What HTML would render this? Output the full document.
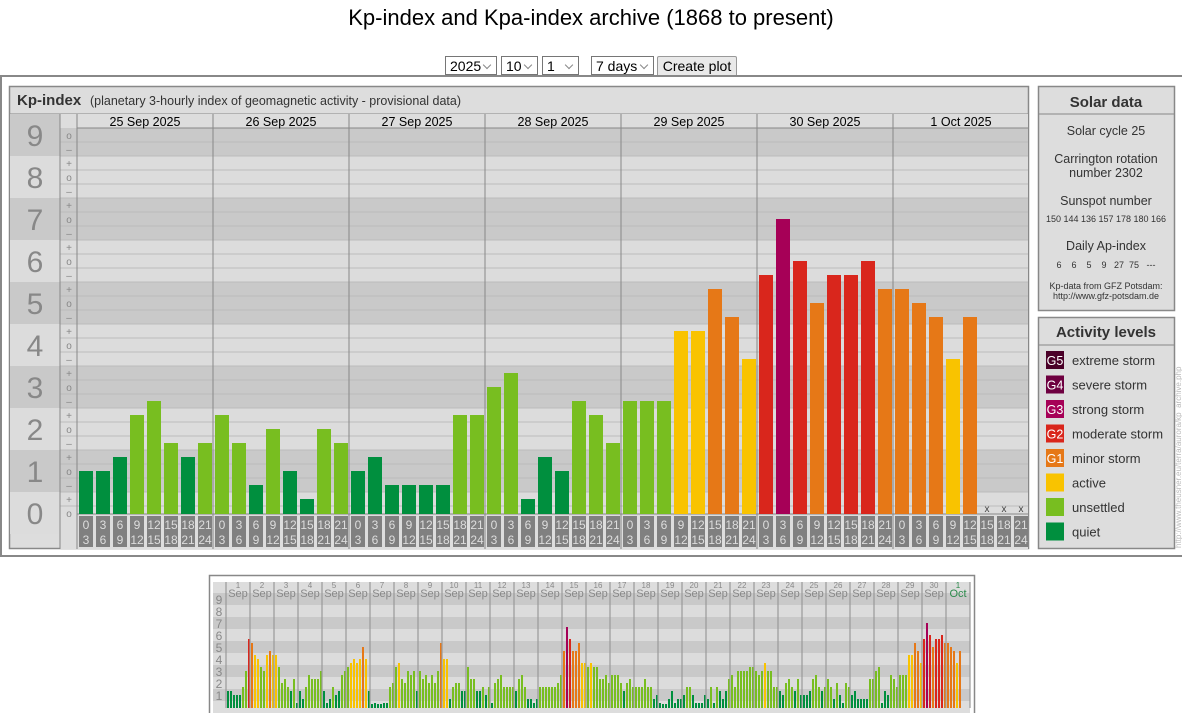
<!DOCTYPE html>
<html><head><meta charset="utf-8"><style>
html,body{margin:0;padding:0;background:#fff;}
body{width:1182px;height:713px;position:relative;overflow:hidden;font-family:"Liberation Sans",Arial,sans-serif;}
h1{position:absolute;left:0;width:1182px;top:5px;margin:0;text-align:center;font-weight:normal;font-size:22px;color:#000;}
.sel{position:absolute;top:56px;height:19px;border:1px solid #767676;background:#fff;font-size:14px;line-height:19px;box-sizing:border-box;padding-left:4px;}
.sel:after{content:"";position:absolute;right:6px;top:5px;width:5px;height:5px;border-right:1px solid #888;border-bottom:1px solid #888;transform:rotate(45deg);}
.btn{position:absolute;top:56px;left:657px;width:80px;height:21px;border:1px solid #999;background:#e9e9e9;font-size:14px;line-height:19px;text-align:center;box-sizing:border-box;border-radius:2px;}
svg{position:absolute;left:0;top:0;}
</style></head><body>
<h1>Kp-index and Kpa-index archive (1868 to present)</h1>
<div class="sel" style="left:445px;width:52px">2025</div>
<div class="sel" style="left:501px;width:37px">10</div>
<div class="sel" style="left:542px;width:37px">1</div>
<div class="sel" style="left:591px;width:63px">7 days</div>
<div class="btn">Create plot</div>
<svg id="s" width="1182" height="713" xmlns="http://www.w3.org/2000/svg" font-family="Liberation Sans, Arial, sans-serif"></svg>
<script>
(function(){
var s=document.getElementById('s'),h='';
function R(x,y,w,hh,f,st,sw){h+='<rect x="'+x+'" y="'+y+'" width="'+w+'" height="'+hh+'" fill="'+f+'"'+(st?' stroke="'+st+'" stroke-width="'+(sw||1)+'"':'')+'/>';}
function L(x1,y1,x2,y2,c,w){h+='<line x1="'+x1+'" y1="'+y1+'" x2="'+x2+'" y2="'+y2+'" stroke="'+c+'" stroke-width="'+(w||1)+'"/>';}
function T(x,y,t,sz,c,a,wgt){h+='<text x="'+x+'" y="'+y+'" font-size="'+sz+'" fill="'+c+'" text-anchor="'+(a||'start')+'"'+(wgt?' font-weight="bold"':'')+'>'+t+'</text>';}
function col(v){v=Math.round(v*3)/3;if(v<1.5)return'#008f3e';if(v<3.5)return'#78be20';if(v<4.5)return'#f9c300';if(v<5.5)return'#e67817';if(v<6.5)return'#d9261c';if(v<7.5)return'#a60057';if(v<8.5)return'#6e0040';return'#4a0028';}
R(1,76,1190,480,'#fff','#888',2);
R(9.5,86.5,1019,462,'#ddd','#888',1.5);
L(10,114,1028,114,'#888',1);
T(17,105,'Kp-index',15,'#333','start',1);
T(90,105,'(planetary 3-hourly index of geomagnetic activity - provisional data)',12.5,'#333');
for(var k=9;k>=0;k--){var y0=Math.max(128,492-42*k),y1=Math.min(514,534-42*k);var c=(k%2)?'#c9c9c9':'#dcdcdc';
R(10,Math.max(114,492-42*k),50,Math.min(549,534-42*k)-Math.max(114,492-42*k),c);
R(60,y0,968,y1-y0,c);
T(35,513-42*k+11,k,30,'#888','middle');}
R(60,514,968,35,'#ddd');R(60,114,968,14,'#ddd');
for(var yl=142;yl<514;yl+=14)L(60,yl,1028,yl,'#bbb',1);
var marks=['o','+','–'];
for(var v=0;v<=27;v++){var yy=513-14*v;if(yy<130)continue;T(69,yy+4,marks[v%3],10,'#888','middle');}
L(60,114,60,549,'#888',1);L(77,114,77,549,'#888',1);L(77,128,1028,128,'#888',1);L(77,514,1028,514,'#888',1);
var days=['25 Sep 2025','26 Sep 2025','27 Sep 2025','28 Sep 2025','29 Sep 2025','30 Sep 2025','1 Oct 2025'];
var data=[[1,1,4/3,7/3,8/3,5/3,4/3,5/3],[7/3,5/3,2/3,2,1,1/3,2,5/3],[1,4/3,2/3,2/3,2/3,2/3,7/3,7/3],[3,10/3,1/3,4/3,1,8/3,7/3,5/3],[8/3,8/3,8/3,13/3,13/3,16/3,14/3,11/3],[17/3,7,6,5,17/3,17/3,6,16/3],[16/3,5,14/3,11/3,14/3,null,null,null]];
var hr=[['0','3'],['3','6'],['6','9'],['9','12'],['12','15'],['15','18'],['18','21'],['21','24']];
for(var d=0;d<7;d++){var dx=77+136*d;T(dx+68,126,days[d],12.5,'#000','middle');
if(d>0)L(dx,114,dx,549,'#888',1);
for(var i=0;i<8;i++){var bx=dx+2+17*i,bv=data[d][i];
if(bv!=null){var bt=513-42*bv;R(bx,bt,14,514-bt,col(bv));}else T(bx+7,512,'x',10,'#444','middle');
R(bx,516,14,31,'#808080');T(bx+7,529,hr[i][0],12,'#ddd','middle');T(bx+7,544,hr[i][1],12,'#ddd','middle');}}
R(1038.5,86.5,136,224,'#ddd','#888',1.5);L(1039,114,1174,114,'#888',1);
T(1106,107,'Solar data',15,'#333','middle',1);
T(1106,135,'Solar cycle 25',12.5,'#333','middle');
T(1106,163,'Carrington rotation',12.5,'#333','middle');T(1106,177,'number 2302',12.5,'#333','middle');
T(1106,205,'Sunspot number',12.5,'#333','middle');
T(1106,222,'150 144 136 157 178 180 166',9,'#333','middle');
T(1106,250,'Daily Ap-index',12.5,'#333','middle');
T(1106,268,'6 &#160;&#160; 6 &#160;&#160; 5 &#160;&#160; 9 &#160;&#160;27 &#160;75 &#160; ---',9,'#333','middle');
T(1106,289,'Kp-data from GFZ Potsdam:',9,'#333','middle');T(1106,299,'http://www.gfz-potsdam.de',9,'#333','middle');
R(1038.5,317.5,136,231,'#ddd','#888',1.5);L(1039,345,1174,345,'#888',1);
T(1106,337,'Activity levels',15,'#333','middle',1);
var lg=[['#4a0028','G5','extreme storm'],['#6e0040','G4','severe storm'],['#a60057','G3','strong storm'],['#d9261c','G2','moderate storm'],['#e67817','G1','minor storm'],['#f9c300','','active'],['#78be20','','unsettled'],['#008f3e','','quiet']];
for(var i=0;i<8;i++){var cy=360+24.5*i;R(1046,cy-9,18,18,lg[i][0]);if(lg[i][1])T(1055,cy+5,lg[i][1],12.5,'#fff','middle');T(1072,cy+5,lg[i][2],13,'#333');}
h+='<text transform="translate(1181,548) rotate(-90)" font-size="8" fill="#bbb">http://www.theusner.eu/terra/aurora/kp_archive.php</text>';
R(209.5,575.5,765,150,'#fff','#888',1.5);
R(213,582,757,140,'#ddd');
for(var k=9;k>=1;k--){var yc=707-12*k;R(213,yc-6,757,12,(k%2)?'#c9c9c9':'#dcdcdc');}
R(213,582,757,11,'#ddd');
for(var k=9;k>=1;k--){T(219,707-12*k+5,k,12,'#888','middle');}
var md=[
[4/3,4/3,1,1,1,5/3,3,17/3],[16/3,13/3,4,10/3,3,13/3,14/3,13/3],[13/3,10/3,2,7/3,5/3,4/3,7/3,1/3],[4/3,2/3,5/3,8/3,7/3,7/3,7/3,3],[4/3,1/3,2/3,5/3,1,4/3,8/3,3],[10/3,11/3,4,11/3,4,5,4,4/3],[0,1/3,0,0,1/3,1/3,5/3,2],[10/3,11/3,7/3,2,3,8/3,3,4/3],[3,7/3,8/3,2,8/3,2,3,16/3],[4,4,2/3,5/3,2,2,4/3,4/3],[10/3,7/3,7/3,4/3,4/3,5/3,1,5/3],[1/3,2,7/3,8/3,5/3,5/3,5/3,5/3],[4/3,7/3,8/3,5/3,2/3,2/3,1/3,2/3],[5/3,5/3,5/3,5/3,5/3,5/3,2,8/3],[14/3,20/3,17/3,14/3,14/3,16/3,11/3,11/3],[10/3,11/3,10/3,10/3,7/3,7/3,8/3,2],[8/3,8/3,8/3,2,4/3,2,7/3,5/3],[5/3,5/3,5/3,7/3,5/3,5/3,2/3,1],[1/3,0,0,2/3,4/3,1/3,2/3,2/3],[1,5/3,5/3,1,1/3,1/3,1/3,1],[2/3,5/3,1/3,5/3,4/3,2/3,4/3,7/3],[8/3,5/3,3,3,3,3,10/3,10/3],[3,8/3,3,11/3,3,3,5/3,5/3],[4/3,1,2,7/3,5/3,4/3,7/3,1]].concat(data);
for(var d=0;d<31;d++){var dx=226+24*d;L(dx,582,dx,708,'#999',1.2);
var lab=d<30?(d+1):1,mon=d<30?'Sep':'Oct',lc=d<30?'#888':'#2a8a4a';
T(dx+12,588,lab,8,lc,'middle');T(dx+12,597,mon,11,lc,'middle');
for(var i=0;i<8;i++){var mv=md[d][i];if(mv==null)continue;var mt=707-12*mv;if(mv<0.2)mt=704;R(dx+1+3*i,mt,2,708-mt,col(mv));}}
L(970,582,970,708,'#999',1.2);
s.innerHTML=h;
})();
</script>
</body></html>
